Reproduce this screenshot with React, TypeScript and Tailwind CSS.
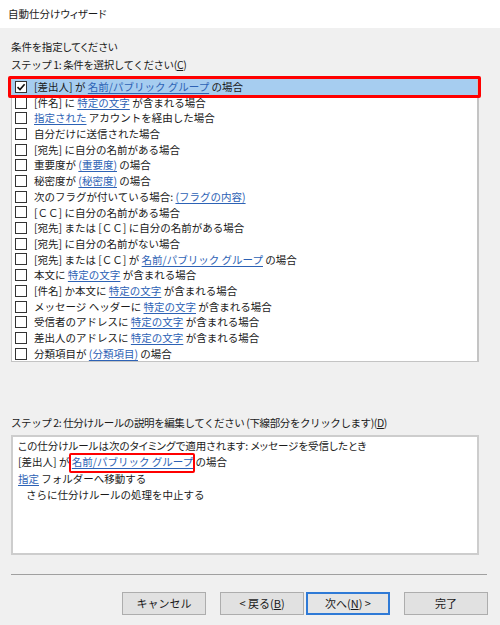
import React from 'react'

type Seg = { t: string; link?: boolean }

const rows: Seg[][] = [
  [{ t: '[差出人] が ' }, { t: '名前/パブリック グループ', link: true }, { t: ' の場合' }],
  [{ t: '[件名] に ' }, { t: '特定の文字', link: true }, { t: ' が含まれる場合' }],
  [{ t: '指定された', link: true }, { t: ' アカウントを経由した場合' }],
  [{ t: '自分だけに送信された場合' }],
  [{ t: '[宛先] に自分の名前がある場合' }],
  [{ t: '重要度が ' }, { t: '(重要度)', link: true }, { t: ' の場合' }],
  [{ t: '秘密度が ' }, { t: '(秘密度)', link: true }, { t: ' の場合' }],
  [{ t: '次のフラグが付いている場合: ' }, { t: '(フラグの内容)', link: true }],
  [{ t: '[ＣＣ] に自分の名前がある場合' }],
  [{ t: '[宛先] または [ＣＣ] に自分の名前がある場合' }],
  [{ t: '[宛先] に自分の名前がない場合' }],
  [{ t: '[宛先] または [ＣＣ] が ' }, { t: '名前/パブリック グループ', link: true }, { t: ' の場合' }],
  [{ t: '本文に ' }, { t: '特定の文字', link: true }, { t: ' が含まれる場合' }],
  [{ t: '[件名] か本文に ' }, { t: '特定の文字', link: true }, { t: ' が含まれる場合' }],
  [{ t: 'メッセージ ヘッダーに ' }, { t: '特定の文字', link: true }, { t: ' が含まれる場合' }],
  [{ t: '受信者のアドレスに ' }, { t: '特定の文字', link: true }, { t: ' が含まれる場合' }],
  [{ t: '差出人のアドレスに ' }, { t: '特定の文字', link: true }, { t: ' が含まれる場合' }],
  [{ t: '分類項目が ' }, { t: '(分類項目)', link: true }, { t: ' の場合' }],
]

const Link = ({ children }: { children: React.ReactNode }) => (
  <span className="text-[#2d62b5] underline underline-offset-2 decoration-[#2d62b5]">{children}</span>
)

const CheckBox = ({ checked }: { checked?: boolean }) => (
  <span className="w-[12px] h-[12px] border border-[#333333] bg-white flex items-center justify-center shrink-0">
    {checked && (
      <svg width="10" height="10" viewBox="0 0 10 10">
        <path d="M1.5 5.2 L4 7.6 L8.6 2.2" fill="none" stroke="#111" strokeWidth="1.6" />
      </svg>
    )}
  </span>
)

const Btn = ({ children, focus }: { children: React.ReactNode; focus?: boolean }) => (
  <div
    className={
      focus
        ? 'w-[84px] h-[23px] flex items-center justify-center bg-[#e5e5e5] border-2 border-[#2f7ad6] text-[11px]'
        : 'w-[84px] h-[23px] flex items-center justify-center bg-[#e1e1e1] border border-[#adadad] text-[11px]'
    }
  >
    {children}
  </div>
)

export default function App() {
  return (
    <div className="w-[500px] h-[625px] bg-[#f0f0f0] text-[#1a1a1a] font-['Noto_Sans_CJK_JP','Noto_Sans',sans-serif] text-[10.5px] flex flex-col overflow-hidden">
      {/* title bar */}
      <div className="h-[28px] bg-white flex items-center px-[8px] text-[10.5px] [font-feature-settings:'palt']">
        自動仕分けウィザード
      </div>

      <div className="px-[11px] pt-[10px] flex flex-col">
        <div className="h-[18px] leading-[18px] [font-feature-settings:'palt']">条件を指定してください</div>
        <div className="h-[18px] leading-[18px] tracking-[-0.4px]">
          ステップ 1: 条件を選択してください(<span className="underline">C</span>)
        </div>

        {/* condition list */}
        <div className="mt-[2px] w-[468px] h-[286px] bg-white border border-[#c4c4c4] border-r-2 pt-[2px] flex flex-col">
          {rows.map((segs, i) => (
            <div
              key={i}
              className={
                i === 0
                  ? 'relative h-[16px] flex items-center gap-[7px] pl-[3px] bg-[#a6cdf0] whitespace-nowrap'
                  : 'h-[15.7px] flex items-center gap-[7px] pl-[3px] whitespace-nowrap'
              }
            >
              <CheckBox checked={i === 0} />
              <span>
                {segs.map((s, j) =>
                  s.link ? <Link key={j}>{s.t}</Link> : <span key={j}>{s.t}</span>
                )}
              </span>
              {i === 0 && (
                <span className="absolute -left-[4px] -right-[4px] -top-[3px] -bottom-[3px] border-[3px] border-[#ff0000] rounded-[2px]" />
              )}
            </div>
          ))}
        </div>

        <div className="mt-[52px] h-[18px] leading-[18px] tracking-[-0.4px]">
          ステップ 2: 仕分けルールの説明を編集してください (下線部分をクリックします)(<span className="underline">D</span>)
        </div>

        {/* description box */}
        <div className="mt-[3px] w-[468px] h-[120px] bg-white border-2 border-[#cdcdcd] pl-[5px] pt-[1px] flex flex-col leading-[16.3px] whitespace-nowrap">
          <div className="[font-feature-settings:'palt']">
            この仕分けルールは次のタイミングで適用されます: メッセージを受信したとき
          </div>
          <div className="flex">
            <span>[差出人] が&nbsp;</span>
            <span className="relative">
              <Link>名前/パブリック グループ</Link>
              <span className="absolute -left-[3px] -right-[2px] -top-[1px] -bottom-[2px] border-2 border-[#ff0000] rounded-[2px]" />
            </span>
            <span>&nbsp;の場合</span>
          </div>
          <div>
            <Link>指定</Link> フォルダーへ移動する
          </div>
          <div className="pl-[8px]">さらに仕分けルールの処理を中止する</div>
        </div>

        {/* separator */}
        <div className="mt-[19px] w-[476px] h-px bg-[#a0a0a0]" />

        {/* buttons */}
        <div className="mt-[17px] flex pl-[111px]">
          <Btn>キャンセル</Btn>
          <div className="ml-[14px]">
            <Btn>
              &lt; 戻る(<span className="underline">B</span>)
            </Btn>
          </div>
          <div className="ml-[2px]">
            <Btn focus>
              次へ(<span className="underline">N</span>) &gt;
            </Btn>
          </div>
          <div className="ml-[14px]">
            <Btn>完了</Btn>
          </div>
        </div>
      </div>
    </div>
  )
}
